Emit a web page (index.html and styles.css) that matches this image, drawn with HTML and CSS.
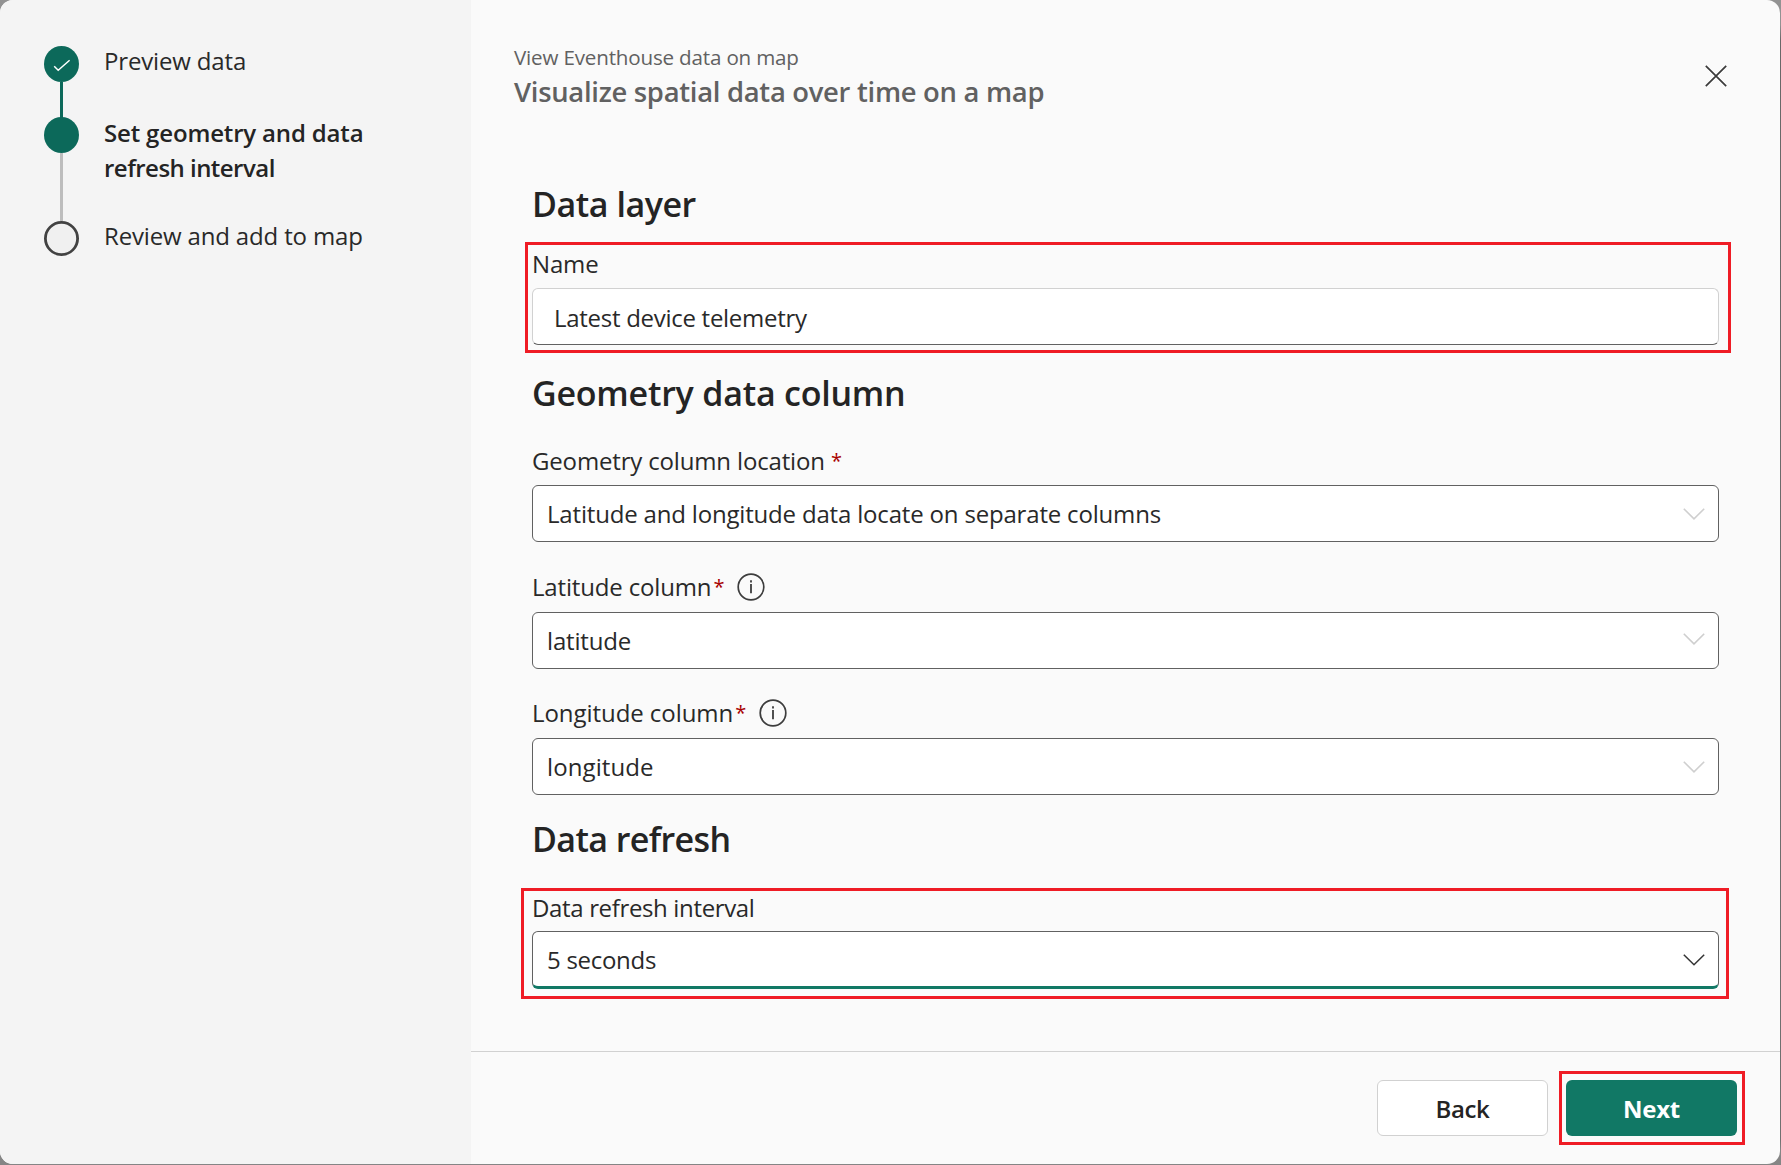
FILE: index.html
```html
<!DOCTYPE html>
<html lang="en">
<head>
<meta charset="utf-8">
<title>View Eventhouse data on map</title>
<link rel="stylesheet" href="styles.css">
</head>
<body>
<div class="dialog">
  <nav class="sidebar">
    <ol class="steps">
      <li class="step step-done">
        <div class="track">
          <svg class="marker" width="35" height="36" viewBox="0 0 35 36"><ellipse cx="17.5" cy="18" rx="17.5" ry="18" fill="#0c695a"/><path d="M10.2 20.3 14.2 24.3 25.6 14.2" fill="none" stroke="#fff" stroke-width="1.5"/></svg>
          <span class="line line-done"></span>
        </div>
        <span class="step-text">Preview data</span>
      </li>
      <li class="step step-current">
        <div class="track">
          <svg class="marker" width="35" height="36" viewBox="0 0 35 36"><ellipse cx="17.5" cy="18" rx="17.5" ry="18" fill="#0c695a"/></svg>
          <span class="line"></span>
        </div>
        <span class="step-text">Set geometry and data<br><span class="tighter">refresh interval</span></span>
      </li>
      <li class="step">
        <div class="track">
          <svg class="marker" width="35" height="35" viewBox="0 0 35 35"><circle cx="17.5" cy="17.5" r="16.1" fill="#f0f0f0" stroke="#424242" stroke-width="2.8"/></svg>
        </div>
        <span class="step-text">Review and add to map</span>
      </li>
    </ol>
  </nav>

  <main class="content">
    <header class="header">
      <div>
        <div class="eyebrow">View Eventhouse data on map</div>
        <h1 class="title">Visualize spatial data over time on a map</h1>
      </div>
      <svg class="close" width="22" height="22" viewBox="0 0 22 22"><path d="M.8.8 21.2 21.2M21.2.8.8 21.2" fill="none" stroke="#3b3b3b" stroke-width="1.7"/></svg>
    </header>

    <form class="form">
      <h2 class="heading heading-layer">Data layer</h2>
      <div class="highlight highlight-name">
        <div class="label">Name</div>
        <div class="control input tight">Latest device telemetry</div>
      </div>

      <h2 class="heading heading-geometry">Geometry data column</h2>
      <div class="field field-location">
        <div class="label">Geometry column location <span class="star star-spaced">*</span></div>
        <div class="control"><span class="value-long">Latitude and longitude data locate on separate columns</span><svg class="chevron" width="22" height="12" viewBox="0 0 22 12"><path d="M.8.8 11 10.8 21.2.8" fill="none" stroke="#cfcfcf" stroke-width="1.6"/></svg></div>
      </div>
      <div class="field field-latitude">
        <div class="label">Latitude column<span class="star">*</span><svg class="info" width="28" height="28" viewBox="0 0 28 28"><circle cx="14" cy="14" r="12.8" fill="none" stroke="#3d3d3d" stroke-width="1.7"/><path d="M14 11v9.3M14 7.2v2.2" stroke="#3d3d3d" stroke-width="1.8"/></svg></div>
        <div class="control"><span>latitude</span><svg class="chevron chevron-up" width="22" height="12" viewBox="0 0 22 12"><path d="M.8.8 11 10.8 21.2.8" fill="none" stroke="#cfcfcf" stroke-width="1.6"/></svg></div>
      </div>
      <div class="field field-longitude">
        <div class="label"><span class="loose">Longitude column</span><span class="star">*</span><svg class="info" width="28" height="28" viewBox="0 0 28 28"><circle cx="14" cy="14" r="12.8" fill="none" stroke="#3d3d3d" stroke-width="1.7"/><path d="M14 11v9.3M14 7.2v2.2" stroke="#3d3d3d" stroke-width="1.8"/></svg></div>
        <div class="control"><span class="looser">longitude</span><svg class="chevron" width="22" height="12" viewBox="0 0 22 12"><path d="M.8.8 11 10.8 21.2.8" fill="none" stroke="#cfcfcf" stroke-width="1.6"/></svg></div>
      </div>

      <h2 class="heading heading-refresh">Data refresh</h2>
      <div class="highlight highlight-refresh">
        <div class="label label-refresh">Data refresh interval</div>
        <div class="control control-active"><span class="tight">5 seconds</span><svg class="chevron" width="22" height="12" viewBox="0 0 22 12"><path d="M.8.8 11 10.8 21.2.8" fill="none" stroke="#333" stroke-width="1.5"/></svg></div>
      </div>
    </form>

    <footer class="footer">
      <div class="button button-back">Back</div>
      <div class="highlight highlight-next"><div class="button button-next">Next</div></div>
    </footer>
  </main>
</div>
</body>
</html>
```
FILE: styles.css
```css
* { box-sizing: border-box; }

body {
  margin: 0;
  width: 1781px;
  height: 1165px;
  overflow: hidden;
  background: linear-gradient(#929292 25px, #686868 40px, #707070 1140px, #858585 1150px);
  color: #292929;
  font: 24px/32px "Open Sans", "Noto Sans", sans-serif;
  letter-spacing: -0.16px;
}

.dialog {
  display: flex;
  width: 1780px;
  height: 1164px;
  border-radius: 13px;
  overflow: hidden;
  background: #fafafa;
}

.sidebar {
  flex: none;
  width: 471px;
  padding: 43px 44px;
  background: #f4f4f4;
}

.steps { margin: 0; padding: 0; list-style: none; }
.step { display: flex; gap: 25px; line-height: 35px; height: 72px; white-space: nowrap; }
.step-current { height: 103px; font-weight: 600; color: #242424; }
.track { display: flex; flex-direction: column; align-items: center; width: 35px; padding-top: 3px; }
.step-current .track { padding-top: 2px; }
.marker { flex: none; display: block; }
.line { flex: 1; width: 3px; margin-bottom: -3px; background: #bdbdbd; }
.line-done { background: #0c695a; }

.content { flex: 1; display: flex; flex-direction: column; }

.header {
  display: flex;
  justify-content: space-between;
  height: 182px;
  padding: 43px 53px 0 43px;
  color: #616161;
}
.eyebrow { font-size: 20.6px; line-height: 28px; letter-spacing: -0.18px; }
.title { margin: 3px 0 0; font-size: 27.4px; font-weight: 600; line-height: 36px; letter-spacing: -0.28px; }
.close { margin-top: 22px; }

.form { flex: 1; padding: 0 61px; }

.heading { margin: 0; font-size: 34px; font-weight: 600; line-height: 44px; color: #242424; }
.heading-layer { letter-spacing: -0.45px; }
.heading-geometry { margin-top: 18px; letter-spacing: -0.22px; }
.heading-refresh { margin-top: 22px; letter-spacing: -0.6px; }

.highlight { border: 3px solid #ef1c25; }
.highlight-name { margin: 16px -12px 0 -7px; padding: 3px 9px 5px 4px; }
.highlight-refresh { margin: 27px -10px 0 -11px; padding: 1px 7px 7px 8px; }
.highlight-next { padding: 6px 5px 6px 4px; }

.label { display: flex; align-items: center; height: 32px; margin: 0 0 8px; white-space: pre; }
.label-refresh { margin-bottom: 7px; letter-spacing: -0.35px; }
.field-location { margin-top: 30px; }
.field-latitude { margin-top: 29px; }
.field-latitude .label { margin-bottom: 9px; }
.field-longitude { margin-top: 28px; }
.field-longitude .label { margin-bottom: 9px; }

.star { margin-left: 2px; color: #a80000; font-size: 20px; }
.star-spaced { margin-left: 0; }
.info { margin-left: 13px; }

.control {
  display: flex;
  align-items: center;
  justify-content: space-between;
  height: 57px;
  padding: 0 13px 0 14px;
  border: 1px solid #616161;
  border-radius: 6px;
  background: #fff;
}
.input { padding: 2px 20px 0 21px; border-color: #d1d1d1; border-bottom-color: #616161; }
.control-active { height: 58px; padding-top: 2px; border-bottom: 3px solid #117865; }
.control-active .chevron { margin-top: -1px; }
.chevron { flex: none; }
.chevron-up { margin-top: -3px; }

.value-long { letter-spacing: -0.18px; }
.tight { letter-spacing: -0.28px; }
.tighter { letter-spacing: -0.53px; }
.loose { letter-spacing: -0.06px; }
.looser { letter-spacing: 0.1px; }

.footer {
  display: flex;
  justify-content: flex-end;
  align-items: flex-start;
  gap: 11px;
  height: 113px;
  padding: 19px 35px 0 0;
  border-top: 1px solid #d1d1d1;
}
.button {
  width: 171px;
  height: 56px;
  border-radius: 6px;
  font-weight: 600;
  line-height: 57px;
  text-align: center;
}
.button-back { margin-top: 9px; border: 1px solid #d1d1d1; background: #fff; color: #242424; line-height: 55px; letter-spacing: -0.4px; }
.button-next { background: #117865; color: #fff; font-weight: 700; letter-spacing: -0.3px; }
```
